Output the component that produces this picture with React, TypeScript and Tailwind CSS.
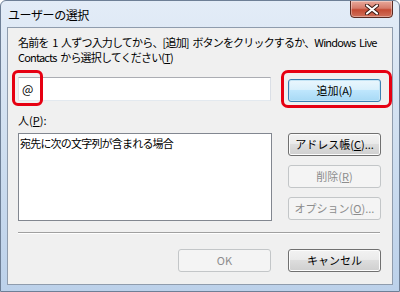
import React from "react";

const font = { fontFamily: '"Noto Sans CJK JP", "Noto Sans", sans-serif' };

function Btn({
  children,
  kind = "normal",
  className = "",
}: {
  children: React.ReactNode;
  kind?: "normal" | "default" | "disabled";
  className?: string;
}) {
  const base =
    "flex items-center justify-center w-[93px] h-[23px] rounded-[3px] border text-[11px] leading-none";
  const styles =
    kind === "default"
      ? "border-[#3c7fb1] bg-[linear-gradient(#eaf6fd_0%,#d9f0fc_45%,#bee6fd_50%,#a7d9f5_100%)] text-black shadow-[inset_0_0_0_1px_#c4e5f6]"
      : kind === "disabled"
      ? "border-[#c3c6c8] bg-[#f4f4f4] text-[#8d8d8d]"
      : "border-[#707070] bg-[linear-gradient(#f2f2f2_0%,#ebebeb_45%,#dddddd_50%,#cfcfcf_100%)] text-black shadow-[inset_0_0_0_1px_#fcfcfc]";
  return <div className={`${base} ${styles} ${className}`}>{children}</div>;
}

export default function App() {
  return (
    <div
      className="relative w-[400px] h-[292px] overflow-hidden bg-[linear-gradient(#e3ecf7_0%,#d3e1f1_40%,#bcd1ea_100%)] border border-[#6e7f96] rounded-t-[6px] flex flex-col"
      style={font}
    >
      {/* title bar */}
      <div className="relative h-[26px] shrink-0 flex items-center">
        <span className="ml-[7px] mt-[1px] text-[12px] text-black tracking-[-0.4px]">ユーザーの選択</span>
        <div className="absolute right-[6px] top-[-1px] w-[43px] h-[18px] rounded-b-[4px] border border-[#5a2a22] bg-[linear-gradient(#e9a99b_0%,#d67b6a_45%,#c44a33_55%,#d0705a_100%)] flex items-center justify-center shadow-[inset_0_0_0_1px_rgba(255,255,255,0.35)]">
          <svg width="14" height="11" viewBox="0 0 14 11">
            <path d="M2 1.5 L12 9.5 M12 1.5 L2 9.5" stroke="#3a1a14" strokeWidth="4" strokeLinecap="round" />
            <path d="M2 1.5 L12 9.5 M12 1.5 L2 9.5" stroke="#ffffff" strokeWidth="2.2" strokeLinecap="round" />
          </svg>
        </div>
      </div>

      {/* content */}
      <div className="mx-[6px] h-[258px] border border-[#8f9cad] bg-[#f0f0f0] pl-[10px] pr-[11px] pt-[7px] flex flex-col text-[11px] text-black">
        <div className="leading-[15px] tracking-[-0.82px] [word-spacing:2px]">
          名前を 1 人ずつ入力してから、[追加] ボタンをクリックするか、Windows Live
          <br />
          Contacts から選択してください(<span className="underline">T</span>)
        </div>

        <div className="relative mt-[12px] flex items-start justify-between">
          <div className="w-[253px] h-[24px] bg-white border border-[#abadb3] border-b-[#e3e9ef] border-l-[#e2e3ea] border-r-[#dbdfe6] flex items-center pl-[3px] text-[12px]">
            @
          </div>
          <Btn kind="default" className="mt-[2px]">追加(A)</Btn>
          <div className="absolute left-[-6px] top-[-7px] w-[31px] h-[36px] rounded-[6px] border-[3px] border-[#e60012]" />
          <div className="absolute right-[-11px] top-[-7px] w-[111px] h-[38px] rounded-[7px] border-[3px] border-[#e60012]" />
        </div>

        <div className="mt-[11px] leading-[15px]">
          人(<span className="underline">P</span>):
        </div>

        <div className="mt-[5px] flex items-start justify-between">
          <div className="w-[254px] h-[88px] bg-white border border-[#828790] pl-[1px] pt-[2px] text-[11px] leading-[15px] tracking-[-0.8px]">
            宛先に次の文字列が含まれる場合
          </div>
          <div className="flex flex-col gap-[9px]">
            <Btn className="h-[22px]">
              アドレス帳(<span className="underline">C</span>)...
            </Btn>
            <Btn kind="disabled" className="h-[22px]">
              削除(<span className="underline">R</span>)
            </Btn>
            <Btn kind="disabled" className="h-[22px]">
              オプション(<span className="underline">O</span>)...
            </Btn>
          </div>
        </div>

        <div className="mt-[11px] h-[2px] border-t border-[#a0a0a0] border-b border-b-white mr-[1px]" />

        <div className="mt-[15px] flex justify-end gap-[17px]">
          <Btn kind="disabled">OK</Btn>
          <Btn>キャンセル</Btn>
        </div>
      </div>
    </div>
  );
}
